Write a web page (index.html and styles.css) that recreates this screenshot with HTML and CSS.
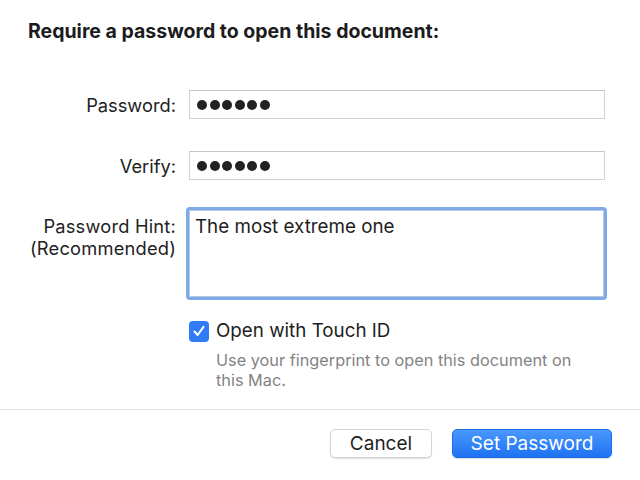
FILE: index.html
```html
<!DOCTYPE html>
<html>
<head>
<meta charset="utf-8">
<link rel="stylesheet" href="styles.css">
</head>
<body>
<div class="dialog">
  <h1 class="title">Require a password to open this document:</h1>
  <div class="form">
    <div class="row">
      <div class="lbl">Password:</div>
      <div class="field"><span class="dots"><i></i><i></i><i></i><i></i><i></i><i></i></span></div>
    </div>
    <div class="row row-verify">
      <div class="lbl">Verify:</div>
      <div class="field"><span class="dots"><i></i><i></i><i></i><i></i><i></i><i></i></span></div>
    </div>
    <div class="row row-hint">
      <div class="lbl lbl-hint">Password Hint:<br>(Recommended)</div>
      <div class="hint-ring"><div class="hint">The most extreme one</div></div>
    </div>
    <div class="row row-touch">
      <div class="lbl"></div>
      <div class="touch">
        <div class="check-line">
          <span class="checkbox"><svg width="20" height="20" viewBox="0 0 20 20"><path d="M5.5 10.5 L8.6 14 L14.5 5.8" fill="none" stroke="#fff" stroke-width="2" stroke-linecap="round" stroke-linejoin="round"/></svg></span>
          <span class="check-label">Open with Touch ID</span>
        </div>
        <p class="desc">Use your fingerprint to open this document on this Mac.</p>
      </div>
    </div>
  </div>
  <div class="sep"></div>
  <div class="buttons">
    <button class="btn btn-cancel">Cancel</button>
    <button class="btn btn-primary">Set Password</button>
  </div>
</div>
</body>
</html>
```
FILE: styles.css
```css
html, body {
  margin: 0;
  padding: 0;
  background: #ffffff;
}
body {
  font-family: Inter, "Liberation Sans", sans-serif;
  color: #1e1e1e;
  width: 640px;
  height: 480px;
  overflow: hidden;
}
.dialog {
  display: flex;
  flex-direction: column;
}
.title {
  margin: 19px 0 0 28px;
  font-size: 19.5px;
  line-height: 24px;
  font-weight: 700;
  color: #1c1c1c;
}
.form {
  display: flex;
  flex-direction: column;
  margin-top: 47px;
}
.row {
  display: flex;
  align-items: center;
}
.lbl {
  width: 176px;
  text-align: right;
  font-size: 18.3px;
  line-height: 22px;
  color: #222;
  flex: none;
}
.field {
  margin-left: 13px;
  width: 407px;
  height: 27px;
  border: 1px solid #d2d2d2;
  border-top-color: #c6c6c6;
  display: flex;
  align-items: center;
  padding-left: 7px;
  box-sizing: content-box;
}
.dots {
  display: flex;
  gap: 2.5px;
}
.dots i {
  width: 10px;
  height: 10px;
  border-radius: 50%;
  background: #222;
}
.row-verify {
  margin-top: 32px;
}
.row-hint {
  margin-top: 27px;
  align-items: flex-start;
}
.lbl-hint {
  margin-top: 8px;
  line-height: 22px;
  letter-spacing: 0.2px;
}
.hint-ring {
  margin-left: 10px;
  padding: 3px;
  background: #7eaaea;
  border-radius: 4px;
}
.hint {
  width: 408px;
  height: 81px;
  background: #fff;
  border: 1px solid #b9c8dd;
  padding: 4px 0 0 5px;
  box-sizing: content-box;
  font-size: 18.8px;
  line-height: 24px;
  color: #1e1e1e;
}
.row-touch {
  margin-top: 20px;
  align-items: flex-start;
}
.touch {
  margin-left: 13px;
  display: flex;
  flex-direction: column;
}
.check-line {
  display: flex;
  align-items: center;
  gap: 7px;
}
.checkbox {
  width: 20px;
  height: 21px;
  border-radius: 4px;
  background: #2f7cf6;
  display: flex;
}
.check-label {
  font-size: 18.8px;
  line-height: 22px;
  color: #1e1e1e;
}
.desc {
  margin: 8px 0 0 27px;
  width: 365px;
  font-size: 16.3px;
  line-height: 20px;
  color: #838383;
}
.sep {
  margin-top: 19px;
  height: 1px;
  background: #e4e4e4;
}
.buttons {
  display: flex;
  justify-content: flex-end;
  gap: 20px;
  padding: 19px 28px 0 0;
}
.btn {
  font-family: Inter, "Liberation Sans", sans-serif;
  font-size: 19px;
  height: 29px;
  border-radius: 5px;
  padding: 0;
  line-height: 27px;
}
.btn-cancel {
  width: 102px;
  background: #ffffff;
  color: #1e1e1e;
  border: 1px solid #d4d4d4;
  box-shadow: 0 1px 1px rgba(0,0,0,0.12);
}
.btn-primary {
  width: 160px;
  color: #ffffff;
  border: 1px solid #1a6ee8;
  background: linear-gradient(#4a98fc, #1d72f2);
  box-shadow: 0 1px 1px rgba(0,0,0,0.15);
}
```
